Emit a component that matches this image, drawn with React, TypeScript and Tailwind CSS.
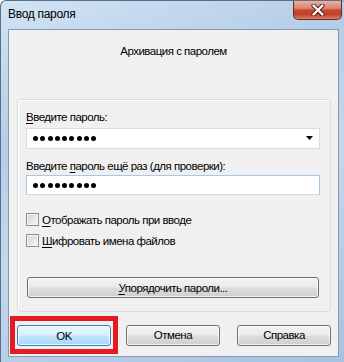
const font = "font-['Liberation_Sans','Noto_Sans',sans-serif] text-[11.5px] tracking-[-0.5px]"

const Dots = () => (
  <div className="flex gap-[2.3px]">
    {Array.from({ length: 9 }).map((_, i) => (
      <span key={i} className="block w-[5px] h-[5px] rounded-full bg-black" />
    ))}
  </div>
)

const Check = ({ children }: { children: React.ReactNode }) => (
  <div className="flex items-center h-[13px]">
    <span className="block w-[13px] h-[13px] border border-[#8e8f8f] bg-[linear-gradient(135deg,#d4d4d4,#f7f7f7)] shadow-[inset_0_0_0_1px_#f4f4f4]" />
    <span className="ml-[3px] leading-[16px]">{children}</span>
  </div>
)

const Btn = ({ children, w, primary }: { children: React.ReactNode, w: string, primary?: boolean }) => {
  const skin = primary
    ? 'border-[#3c7fb1] bg-[linear-gradient(to_bottom,#eaf6fd_0%,#d9f0fc_48%,#bee6fd_52%,#a7d9f5_100%)]'
    : 'border-[#707070] bg-[linear-gradient(to_bottom,#f2f2f2_0%,#ebebeb_48%,#dddddd_52%,#cfcfcf_100%)]'
  return (
    <div className={`${w} h-[21px] flex items-center justify-center rounded-[3px] border ${skin} shadow-[inset_0_0_0_1px_rgba(255,255,255,0.7)] leading-[16px]`}>
      {children}
    </div>
  )
}

export default function App() {
  return (
    <div className={`w-[344px] h-[362px] overflow-hidden ${font} text-black`}>
      <div className="w-[347px] h-[362px] flex flex-col rounded-t-[6px] border-l border-t border-[#5b6f84] bg-[linear-gradient(160deg,#d2e3f4_0%,#b4cde8_30%,#c3d8ee_55%,#a6c2e1_100%)]">
        {/* title bar */}
        <div className="h-[28px] flex items-start">
          <div className="ml-[7px] mt-[5px] text-[12px] tracking-[-0.3px] leading-[16px]">Ввод пароля</div>
          <div className="ml-auto mr-[5px] w-[49px] h-[19px] rounded-b-[5px] border border-t-0 border-[#6b2a1e] bg-[linear-gradient(to_bottom,#eab0a1_0%,#dc8570_40%,#c8442a_52%,#c2432b_75%,#d9806a_100%)] flex items-center justify-center">
            <svg width="14" height="12" viewBox="0 0 14 12">
              <path d="M2.5 1.5 L11.5 10.5 M11.5 1.5 L2.5 10.5" stroke="#4a1c12" strokeWidth="4.2" strokeLinecap="round" />
              <path d="M2.5 1.5 L11.5 10.5 M11.5 1.5 L2.5 10.5" stroke="#ffffff" strokeWidth="2.4" strokeLinecap="round" />
            </svg>
          </div>
        </div>
        {/* client area */}
        <div className="ml-[7px] w-[331px] h-[328px] border border-[#8a9aab] bg-[#f0f0f0] flex flex-col">
          <div className="mt-[13px] text-center leading-[16px]">Архивация с паролем</div>
          <div className="mt-[40px] ml-[8px] w-[314px] h-[213px] rounded-[3px] border border-[#d5dfe5] shadow-[inset_1px_1px_0_#ffffff] flex flex-col pl-[8px]">
            <div className="mt-[9px] leading-[16px]"><u className="underline-offset-2">В</u>ведите пароль:</div>
            <div className="mt-[3px] w-[294px] h-[21px] bg-white border border-[#dcdcdc] flex items-center pl-[6px] pr-[3px]">
              <Dots />
              <svg className="ml-auto mr-[2px]" width="8" height="5" viewBox="0 0 8 5">
                <path d="M0 0 H7 L3.5 4 Z" fill="#000" />
              </svg>
            </div>
            <div className="mt-[9px] leading-[16px]">Введите <u className="underline-offset-2">п</u>ароль ещё раз (для проверки):</div>
            <div className="mt-[1px] w-[294px] h-[20px] bg-white border border-[#a9c8e6] border-b-[#c5dcef] flex items-center pl-[6px]">
              <Dots />
            </div>
            <div className="mt-[18px] flex flex-col gap-[8px]">
              <Check><u className="underline-offset-2">О</u>тображать пароль при вводе</Check>
              <Check><u className="underline-offset-2">Ш</u>ифровать имена файлов</Check>
            </div>
            <div className="mt-[30px] ml-[1px]">
              <Btn w="w-[292px]"><span><u className="underline-offset-2">У</u>порядочить пароли...</span></Btn>
            </div>
          </div>
          <div className="mt-[4px] ml-[1px] flex items-center">
            <div className="border-[5px] border-[#e31b23] pt-[4px] pb-[3px] px-[2px]">
              <Btn w="w-[94px]" primary>OK</Btn>
            </div>
            <div className="ml-[8px]"><Btn w="w-[94px]">Отмена</Btn></div>
            <div className="ml-[17px]"><Btn w="w-[94px]">Справка</Btn></div>
          </div>
        </div>
      </div>
    </div>
  )
}
